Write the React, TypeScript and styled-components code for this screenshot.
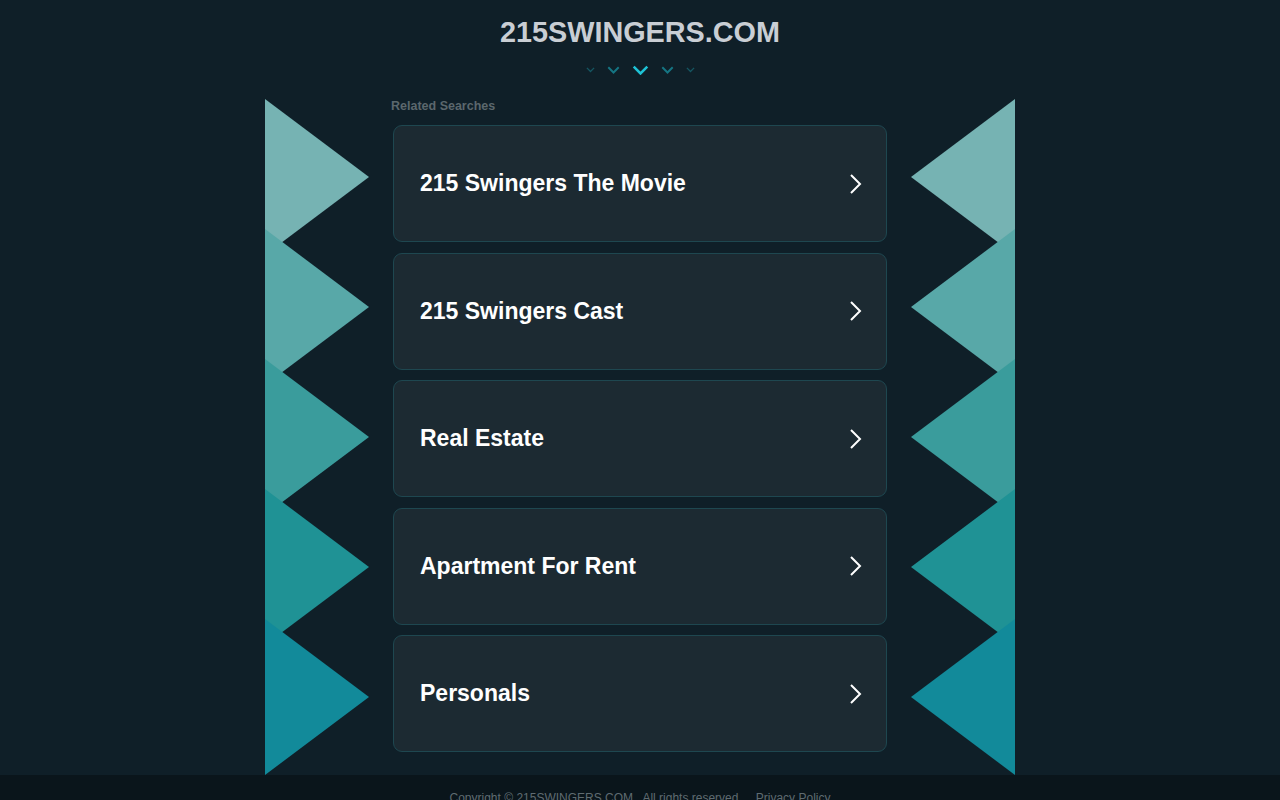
import styled, { createGlobalStyle } from "styled-components";

const GlobalStyle = createGlobalStyle`
  html, body {
    margin: 0;
    padding: 0;
    background: #0f1f28;
    font-family: "Liberation Sans", Arial, sans-serif;
  }
`;

const searches = [
  "215 Swingers The Movie",
  "215 Swingers Cast",
  "Real Estate",
  "Apartment For Rent",
  "Personals",
];

const triColors = ["#76b3b3", "#58a8a8", "#3a9c9c", "#1f9295", "#128a9a"];

const Triangles = ({ flip }: { flip?: boolean }) => (
  <svg width="104" height="676" viewBox="0 0 104 676">
    {triColors.map((c, i) => {
      const top = i * 130;
      const pts = flip
        ? `104,${top} 104,${top + 156} 0,${top + 78}`
        : `0,${top} 0,${top + 156} 104,${top + 78}`;
      return <polygon key={i} points={pts} fill={c} />;
    })}
  </svg>
);

const Arrow = ({ size, color }: { size: number; color: string }) => (
  <svg width={size} height={size * 0.6} viewBox="0 0 20 12">
    <polyline points="2,2 10,10 18,2" fill="none" stroke={color} strokeWidth="3" />
  </svg>
);

export default function App() {
  return (
    <Page>
      <GlobalStyle />
      <Header>
        <Title>215SWINGERS.COM</Title>
        <Arrows>
          <Arrow size={9} color="#155662" />
          <Arrow size={13} color="#157583" />
          <Arrow size={17} color="#1ec3d6" />
          <Arrow size={13} color="#157583" />
          <Arrow size={9} color="#155662" />
        </Arrows>
      </Header>
      <Main>
        <Triangles />
        <Center>
          <Label>Related Searches</Label>
          <List>
            {searches.map((s) => (
              <Card key={s}>
                <CardText>{s}</CardText>
                <svg width="14" height="22" viewBox="0 0 14 22">
                  <polyline points="3,2 12,11 3,20" fill="none" stroke="#ffffff" strokeWidth="2" />
                </svg>
              </Card>
            ))}
          </List>
        </Center>
        <Triangles flip />
      </Main>
      <Footer>
        <span>Copyright © 215SWINGERS.COM . All rights reserved.</span>
        <FooterLink>Privacy Policy</FooterLink>
      </Footer>
    </Page>
  );
}

const Page = styled.div`
  min-height: 800px;
  display: flex;
  flex-direction: column;
`;

const Header = styled.header`
  display: flex;
  flex-direction: column;
  align-items: center;
  padding-top: 16px;
`;

const Title = styled.h1`
  margin: 0;
  font-size: 28.8px;
  line-height: 32px;
  font-weight: 700;
  color: #c9ced4;
`;

const Arrows = styled.div`
  display: flex;
  align-items: center;
  gap: 12px;
  height: 20px;
  margin-top: 12px;
`;

const Main = styled.main`
  width: 750px;
  margin: 19px auto 0;
  display: flex;
  justify-content: space-between;
  align-items: flex-start;
`;

const Center = styled.div`
  width: 494px;
  display: flex;
  flex-direction: column;
`;

const Label = styled.div`
  font-size: 12.5px;
  font-weight: 700;
  color: #5b676d;
  line-height: 14px;
  margin: 0 0 12px -2px;
`;

const List = styled.div`
  display: flex;
  flex-direction: column;
  gap: 10.5px;
`;

const Card = styled.a`
  box-sizing: border-box;
  height: 117px;
  display: flex;
  align-items: center;
  justify-content: space-between;
  padding: 0 24px 0 26px;
  background: #1c2a32;
  border: 1px solid #1e4750;
  border-radius: 9px;
  cursor: pointer;
`;

const CardText = styled.span`
  font-size: 23px;
  font-weight: 700;
  color: #ffffff;
`;

const Footer = styled.footer`
  margin-top: auto;
  height: 25px;
  background: #0a151b;
  display: flex;
  justify-content: center;
  gap: 14px;
  padding-top: 16px;
  font-size: 12px;
  color: #5f6b71;
  overflow: hidden;
`;

const FooterLink = styled.a`
  color: #5f6b71;
`;
